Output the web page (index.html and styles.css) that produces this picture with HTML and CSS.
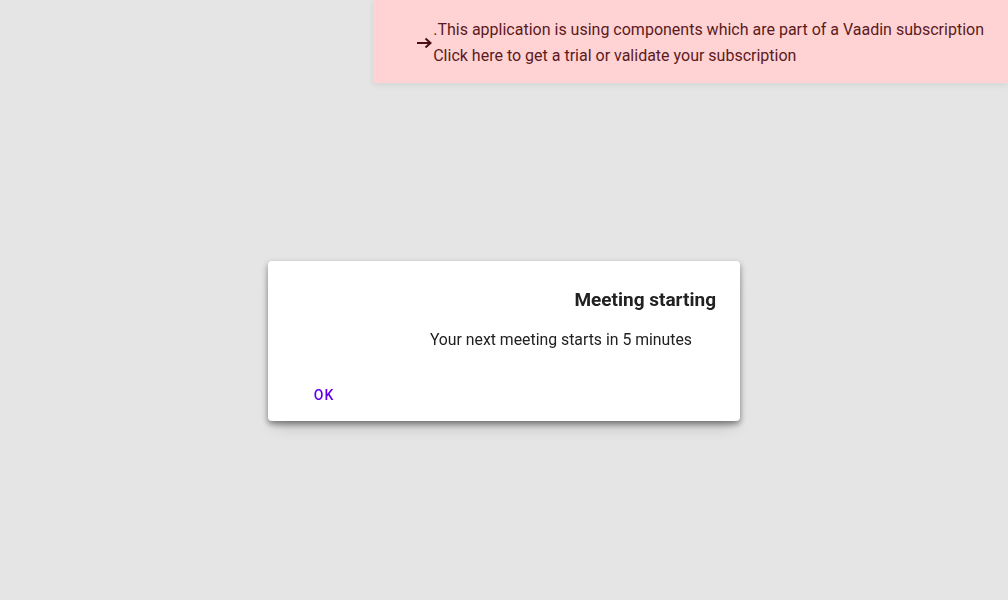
FILE: index.html
```html
<!DOCTYPE html>
<html lang="en" dir="rtl">
<head>
<meta charset="utf-8">
<title>Dialog</title>
<link rel="stylesheet" href="styles.css">
</head>
<body>
<div class="page">
  <header class="top">
    <a class="banner" href="#">
      <span class="banner-text">
        <span class="line">This application is using components which are part of a Vaadin subscription.</span>
        <span class="line">Click here to get a trial or validate your subscription</span>
      </span>
      <svg class="arrow" width="16" height="12" viewBox="0 0 16 12" aria-hidden="true">
        <path d="M1 6H14.5M9.5 1.5L14.5 6L9.5 10.5" fill="none" stroke="#4a0f14" stroke-width="2"/>
      </svg>
    </a>
  </header>
</div>
<div class="overlay">
  <div class="dialog" role="dialog">
    <h2 class="title">Meeting starting</h2>
    <div class="body">Your next meeting starts in 5 minutes</div>
    <div class="footer">
      <button class="btn" type="button">OK</button>
    </div>
  </div>
</div>
</body>
</html>
```
FILE: styles.css
```css
html, body {
  margin: 0;
  padding: 0;
  height: 100%;
}
body {
  background: #e5e5e5;
  font-family: Roboto, "Liberation Sans", sans-serif;
  color: #212121;
  overflow: hidden;
}
.top {
  display: flex;
  justify-content: flex-start;
}
.banner {
  display: flex;
  align-items: center;
  gap: 1px;
  height: 83px;
  box-sizing: border-box;
  padding: 0 24px 0 43px;
  background: #ffd3d3;
  color: #5b1a1e;
  text-decoration: none;
  font-size: 16px;
  border-bottom-left-radius: 4px;
  box-shadow: 0 2px 6px rgba(0,0,0,0.08);
  white-space: nowrap;
}
.banner-text {
  display: flex;
  flex-direction: column;
  align-items: flex-end;
  line-height: 26px;
  margin-top: 3px;
}
.arrow {
  display: block;
  flex: none;
  margin-top: 3px;
}
.overlay {
  position: fixed;
  inset: 0;
  display: flex;
  align-items: center;
  justify-content: center;
  padding-top: 82px;
}
.dialog {
  width: 472px;
  height: 160px;
  box-sizing: border-box;
  background: #fff;
  border-radius: 4px;
  box-shadow: 0 11px 15px -7px rgba(0,0,0,0.2), 0 3px 6px 0 rgba(0,0,0,0.45);
  padding: 27px 24px 8px;
  display: flex;
  flex-direction: column;
}
.title {
  margin: 0;
  font-size: 19px;
  font-weight: 700;
  line-height: 24px;
  color: #212121;
}
.body {
  font-size: 15.8px;
  line-height: 24px;
  padding: 0 24px;
  margin-top: 16px;
  color: #212121;
}
.footer {
  margin-top: auto;
  display: flex;
  justify-content: flex-end;
}
.btn {
  font-family: Roboto, "Liberation Sans", sans-serif;
  min-width: 64px;
  height: 36px;
  padding: 0 8px;
  border: none;
  background: transparent;
  color: #6200ee;
  font-size: 14px;
  font-weight: 500;
  letter-spacing: 0.07em;
  text-transform: uppercase;
  border-radius: 4px;
  cursor: pointer;
}
```
